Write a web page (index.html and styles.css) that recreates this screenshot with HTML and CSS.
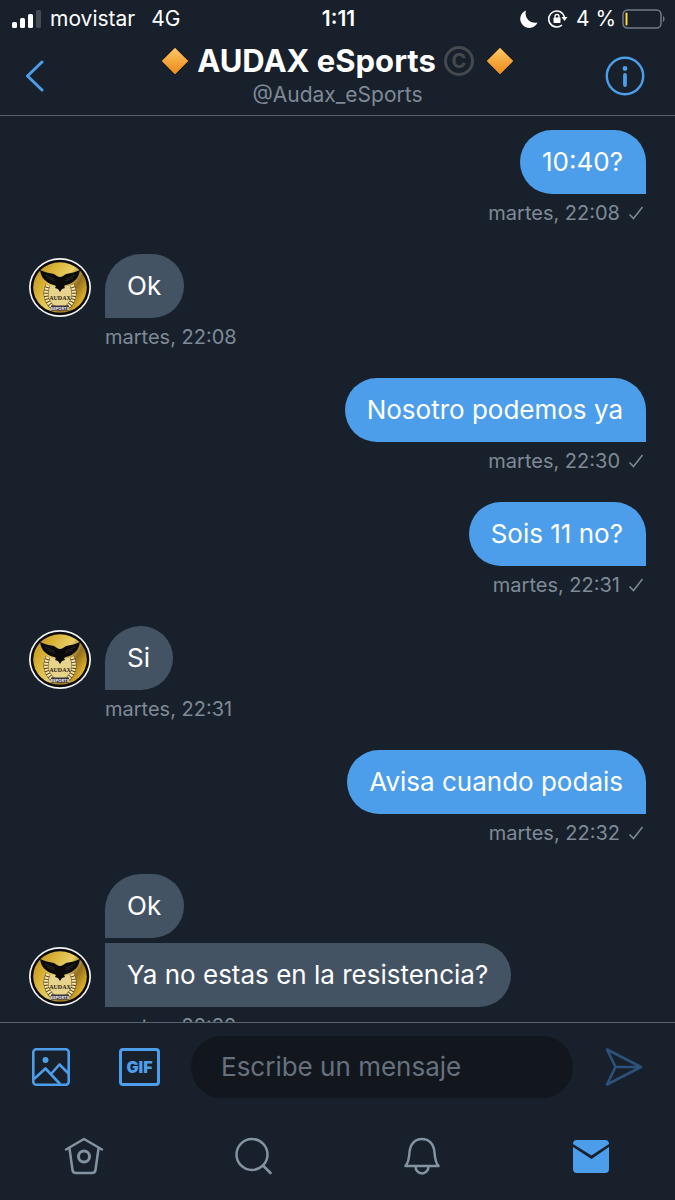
FILE: index.html
```html
<!DOCTYPE html>
<html lang="es">
<head>
    <meta charset="UTF-8">
    <meta name="viewport" content="width=device-width, initial-scale=1.0">
    <title>AUDAX eSports - Mensajes</title>
    <link rel="stylesheet" href="styles.css">
</head>
<body>
    <!-- Shared drawings -->
    <svg class="defs" aria-hidden="true">
        <defs>
            <linearGradient id="gold" x1="0" y1="0" x2="1" y2="0.6">
                <stop offset="0" stop-color="#b98a14"/>
                <stop offset="0.3" stop-color="#d6ae33"/>
                <stop offset="0.6" stop-color="#e8cf66"/>
                <stop offset="0.8" stop-color="#94701f"/>
                <stop offset="1" stop-color="#dcae2a"/>
            </linearGradient>
            <linearGradient id="orange" x1="0" y1="0" x2="0" y2="1">
                <stop offset="0" stop-color="#ffcb6b"/>
                <stop offset="0.5" stop-color="#f3a83c"/>
                <stop offset="1" stop-color="#f08a1c"/>
            </linearGradient>
        </defs>
        <symbol id="avatar" viewBox="0 0 62 60">
            <ellipse cx="31" cy="29.500" rx="31" ry="29.500" fill="#f4f4f4"/>
            <ellipse cx="31" cy="29.500" rx="29.300" ry="27.800" fill="#0b0b0d"/>
            <ellipse cx="31" cy="29.500" rx="26.800" ry="25.300" fill="url(#gold)"/>
            <path d="M20 27q11 4 22 0l2 9-3 10-6 6h-8l-6-6-3-10z" fill="#e6d48c"/>
            <path d="M19 27c-4 9-2 18 7 24M43 27c4 9 2 18-7 24" fill="none" stroke="#5d4514" stroke-width="5"/>
            <path d="M19 27c-4 9-2 18 7 24M43 27c4 9 2 18-7 24" fill="none" stroke="#f6e6b4" stroke-width="4" stroke-dasharray="2 1"/>
            <path d="M11 12c4 2 9 3 14 4 2 1 4 3 6 3s4-2 6-3c5-1 10-2 14-4-1 6-3 9-6 11 0 0-3 3-8 4l-2 1 1 2-3 1-2 3-2-3-3-1 1-2-2-1c-5-1-8-4-8-4-3-2-5-5-6-11z" fill="#0b0b0c"/>
            <path d="M16 17l9 4M18 20l8 3M46 17l-9 4M44 20l-8 3" stroke="#34302a" stroke-width="0.7"/>
            <text x="31" y="42" class="crest-name">AUDAX</text>
            <path d="M22 47.500h18v5H22z" fill="#3a3540"/>
            <text x="31" y="51.500" class="crest-sub">ESPORTS</text>
        </symbol>
        <symbol id="diamond" viewBox="0 0 28 28">
            <path d="M14 1L27 14 14 27 1 14z" fill="url(#orange)" stroke="#dd8a27" stroke-width="0.8" stroke-linejoin="round"/>
        </symbol>
        <symbol id="check" viewBox="0 0 16 16">
            <path d="M1.500 9.500l4 4L14.500 2" fill="none" stroke="currentColor" stroke-width="1.500"/>
        </symbol>
    </svg>

    <div class="app">
        <div class="status">
            <div class="status-left">
                <svg width="30" height="20" viewBox="0 0 30 20">
                    <rect x="0" y="13" width="5" height="6" rx="1.500" fill="#fff"/>
                    <rect x="8" y="9" width="5" height="10" rx="1.500" fill="#fff"/>
                    <rect x="16" y="5" width="5" height="14" rx="1.500" fill="#fff"/>
                    <rect x="24" y="1" width="5" height="18" rx="1.500" fill="#454b54"/>
                </svg>
                <span>movistar</span>
                <span class="network">4G</span>
            </div>
            <span class="clock">1:11</span>
            <div class="status-right">
                <svg width="18" height="18" viewBox="0 0 18 18"><path d="M6 0.500A9 9 0 1 0 17.500 12.500 9.500 9.500 0 0 1 6 0.500z" fill="#fff"/></svg>
                <svg class="lock" width="20" height="18" viewBox="0 0 20 18">
                    <path d="M16.500 7A8 8 0 1 0 14 15" fill="none" stroke="#fff" stroke-width="1.600"/>
                    <path d="M13.500 7h6l-3 4z" fill="#fff"/>
                    <rect x="5.500" y="7.500" width="7" height="5.500" rx="0.800" fill="#fff"/>
                    <path d="M7 8V6.500a2 2 0 0 1 4 0V8" fill="none" stroke="#fff" stroke-width="1.300"/>
                </svg>
                <span>4 %</span>
                <svg width="43" height="20" viewBox="0 0 43 20">
                    <rect x="1" y="1" width="38" height="18" rx="4.500" fill="none" stroke="#747b84" stroke-width="1.500"/>
                    <rect x="3.500" y="3.500" width="2" height="13" rx="1" fill="#ffd83a"/>
                    <path d="M41 7c2 1 2 5 0 6z" fill="#747b84"/>
                </svg>
            </div>
        </div>

        <header class="topbar">
            <button class="icon-btn back" aria-label="Volver">
                <svg width="20" height="32" viewBox="0 0 20 32"><path d="M18 2L3.500 16 18 30" fill="none" stroke="currentColor" stroke-width="3" stroke-linecap="round" stroke-linejoin="round"/></svg>
            </button>
            <div class="peer">
                <h1>
                    <svg width="28" height="28"><use href="#diamond"/></svg>
                    <span class="peer-name">AUDAX eSports</span>
                    <span class="copy">C</span>
                    <svg width="28" height="28"><use href="#diamond"/></svg>
                </h1>
                <p>@Audax_eSports</p>
            </div>
            <button class="icon-btn info" aria-label="Información">
                <svg width="40" height="40" viewBox="0 0 40 40">
                    <circle cx="20" cy="20" r="18.200" fill="none" stroke="currentColor" stroke-width="2.400"/>
                    <circle cx="20" cy="12.500" r="2.400" fill="currentColor"/>
                    <path d="M20 19v10" stroke="currentColor" stroke-width="3.800" stroke-linecap="round"/>
                </svg>
            </button>
        </header>

        <main class="chat">
            <div class="msg sent">
                <p class="bubble">10:40?</p>
                <div class="meta">martes, 22:08 <svg width="16" height="16"><use href="#check"/></svg></div>
            </div>
            <div class="msg received">
                <svg class="avatar" width="62" height="60"><use href="#avatar"/></svg>
                <p class="bubble">Ok</p>
                <div class="meta">martes, 22:08</div>
            </div>
            <div class="msg sent">
                <p class="bubble">Nosotro podemos ya</p>
                <div class="meta">martes, 22:30 <svg width="16" height="16"><use href="#check"/></svg></div>
            </div>
            <div class="msg sent">
                <p class="bubble">Sois 11 no?</p>
                <div class="meta">martes, 22:31 <svg width="16" height="16"><use href="#check"/></svg></div>
            </div>
            <div class="msg received">
                <svg class="avatar" width="62" height="60"><use href="#avatar"/></svg>
                <p class="bubble">Si</p>
                <div class="meta">martes, 22:31</div>
            </div>
            <div class="msg sent">
                <p class="bubble">Avisa cuando podais</p>
                <div class="meta">martes, 22:32 <svg width="16" height="16"><use href="#check"/></svg></div>
            </div>
            <div class="msg received grouped">
                <p class="bubble">Ok</p>
            </div>
            <div class="msg received">
                <svg class="avatar" width="62" height="60"><use href="#avatar"/></svg>
                <p class="bubble follow">Ya no estas en la resistencia?</p>
                <div class="meta">martes, 22:32</div>
            </div>
        </main>

        <form class="composer">
            <button type="button" class="icon-btn photo" aria-label="Foto">
                <svg width="38" height="38" viewBox="0 0 38 38" fill="none" stroke="currentColor" stroke-width="2.600" stroke-linejoin="round">
                    <rect x="1.300" y="1.300" width="35.400" height="35.400" rx="3"/>
                    <circle cx="13.500" cy="12" r="3" fill="currentColor" stroke="none"/>
                    <path d="M2 31l11.500-10.500L28 36M19 26l8.500-9.500L37 26"/>
                </svg>
            </button>
            <button type="button" class="icon-btn gif">GIF</button>
            <input type="text" class="field" placeholder="Escribe un mensaje" aria-label="Escribe un mensaje">
            <button type="submit" class="icon-btn send" aria-label="Enviar">
                <svg width="38" height="38" viewBox="0 0 38 38" fill="none" stroke="currentColor" stroke-width="2.600" stroke-linejoin="round" stroke-linecap="round"><path d="M2 1.500L36 19 2 36.500 10.500 19zM10.500 19H35"/></svg>
            </button>
        </form>

        <nav class="tabs">
            <a href="#inicio" aria-label="Inicio">
                <svg width="40" height="38" viewBox="0 0 40 38" fill="none" stroke="currentColor" stroke-width="2.500" stroke-linejoin="round" stroke-linecap="round">
                    <path d="M2 12.500L20 2l18 10.500M5.500 11.500L8.500 33q0.400 3 3.500 3h16q3.100 0 3.500-3l3-21.500"/>
                    <circle cx="20" cy="19.500" r="5.500" stroke-width="3"/>
                </svg>
            </a>
            <a href="#buscar" aria-label="Buscar">
                <svg width="38" height="38" viewBox="0 0 38 38" fill="none" stroke="currentColor" stroke-width="2.500" stroke-linecap="round">
                    <circle cx="18" cy="17.500" r="15.500"/>
                    <path d="M29 28.500l7.500 7.500"/>
                </svg>
            </a>
            <a href="#avisos" aria-label="Notificaciones">
                <svg width="38" height="38" viewBox="0 0 38 38" fill="none" stroke="currentColor" stroke-width="2.500" stroke-linejoin="round">
                    <path d="M2.500 29C5.500 26 6 22 6.500 15.500 7 7 12 2 19 2s12 5 12.500 13.500C32 22 32.500 26 35.500 29z"/>
                    <path d="M12.500 29.500a6.500 7 0 0 0 13 0"/>
                </svg>
            </a>
            <a href="#mensajes" class="active" aria-label="Mensajes">
                <svg width="38" height="34" viewBox="0 0 38 34" fill="currentColor">
                    <path d="M1 5q0-4 4-4h28q4 0 4 4L19.500 16.500z"/>
                    <path d="M1 8l18.500 12L37 8v22q0 4-4 4H5q-4 0-4-4z"/>
                </svg>
            </a>
        </nav>
    </div>
</body>
</html>
```

FILE: styles.css
```css
* {
    box-sizing: border-box;
}
body {
    margin: 0;
    background-color: #18202b;
    color: #fff;
    font-family: Inter, "Liberation Sans", sans-serif;
}
h1, p {
    margin: 0;
}
svg {
    display: block;
    flex-shrink: 0;
}
.defs {
    position: absolute;
    width: 0;
    height: 0;
}
.app {
    display: flex;
    flex-direction: column;
    height: 100vh;
}
.icon-btn {
    display: flex;
    align-items: center;
    justify-content: center;
    padding: 0;
    border: none;
    background: none;
    color: #4c9eeb;
    cursor: pointer;
}

/* Status bar */
.status {
    display: grid;
    grid-template-columns: 1fr auto 1fr;
    align-items: center;
    height: 38px;
    padding: 0 10px 0 12px;
    font-size: 21px;
    line-height: 24px;
}
.status-left, .status-right {
    display: flex;
    align-items: center;
    gap: 8px;
}
.status-right {
    justify-content: flex-end;
    gap: 6px;
}
.network {
    margin-left: 8px;
}
.lock {
    margin: 0 2px 0 4px;
}
.clock {
    font-weight: 600;
}

/* Header */
.topbar {
    display: flex;
    align-items: center;
    justify-content: space-between;
    height: 78px;
    padding: 0 30px 0 24px;
    border-bottom: 1px solid #59616b;
}
.back, .info {
    width: 40px;
    height: 40px;
    margin-bottom: 2px;
}
.back {
    width: 46px;
    justify-content: flex-start;
}
.peer {
    text-align: center;
}
.peer h1 {
    display: flex;
    align-items: center;
    gap: 8px;
    font-size: 31px;
    font-weight: 700;
    line-height: 36px;
}
.peer p {
    color: #7f8a97;
    font-size: 21px;
    line-height: 32px;
}
.copy {
    width: 30px;
    height: 30px;
    margin-right: 4px;
    border: 3px solid #45484d;
    border-radius: 50%;
    color: #45484d;
    font-size: 20px;
    line-height: 24px;
}

/* Conversation */
.chat {
    flex: 1;
    min-height: 0;
    padding: 14px 29px 0;
    overflow: hidden;
}
.msg {
    display: grid;
    grid-template-columns: 62px 1fr;
    column-gap: 14px;
    margin-bottom: 24px;
}
.msg.grouped {
    margin-bottom: 5px;
}
.bubble {
    grid-column: 2;
    justify-self: start;
    padding: 16px 23px 16px 22px;
    border-radius: 36px 32px 32px 0;
    background-color: #435364;
    font-size: 26px;
    line-height: 32px;
}
.bubble.follow {
    border-top-left-radius: 0;
}
.sent .bubble {
    justify-self: end;
    border-radius: 32px 32px 0 32px;
    background-color: #4c9eeb;
}
.avatar {
    align-self: end;
}
.meta {
    grid-column: 2;
    display: flex;
    align-items: center;
    gap: 8px;
    height: 36px;
    padding-top: 2px;
    color: #7f8a97;
    font-size: 20px;
    line-height: 34px;
}
.sent .meta {
    justify-content: flex-end;
    padding-right: 2px;
}
.crest-name {
    fill: #2a2112;
    font-family: "Liberation Serif", serif;
    font-size: 6px;
    font-weight: 700;
    text-anchor: middle;
}
.crest-sub {
    fill: #f0eef5;
    font-size: 4px;
    font-weight: 700;
    text-anchor: middle;
}

/* Message box */
.composer {
    display: flex;
    align-items: center;
    height: 88px;
    padding: 0 32px;
    border-top: 1px solid #59616b;
}
.gif {
    width: 41px;
    height: 38px;
    margin: 0 31px 0 49px;
    border: 3px solid #4c9eeb;
    border-radius: 4px;
    font-family: inherit;
    font-size: 16px;
    font-weight: 900;
}
.field {
    flex: 1;
    min-width: 0;
    height: 62px;
    padding: 0 30px;
    border: none;
    border-radius: 31px;
    background-color: #12171e;
    color: #fff;
    font-family: inherit;
    font-size: 26px;
}
.field::placeholder {
    color: #66717e;
}
.send {
    margin-left: 32px;
    color: #2c5279;
}

/* Tab bar */
.tabs {
    display: grid;
    grid-template-columns: repeat(4, 1fr);
    height: 90px;
    padding-top: 2px;
}
.tabs a {
    display: flex;
    align-items: center;
    justify-content: center;
    color: #8493a2;
}
.tabs .active {
    color: #4c9eeb;
}
```
